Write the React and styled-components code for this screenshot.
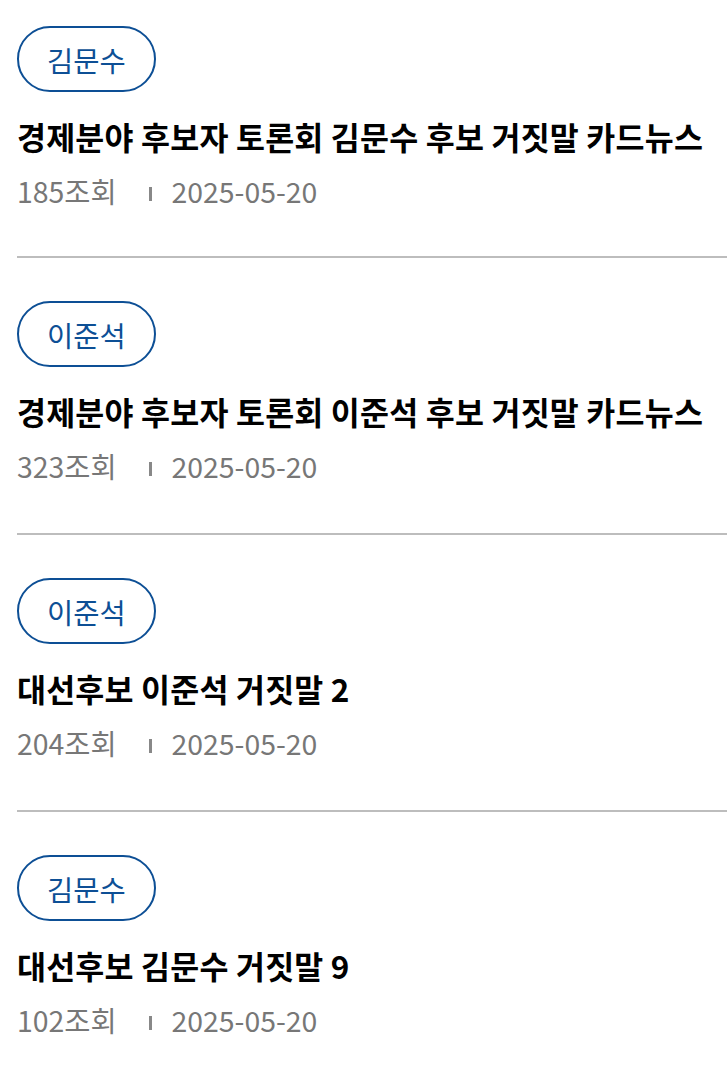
import React from 'react';
import styled, { createGlobalStyle } from 'styled-components';

const GlobalStyle = createGlobalStyle`
  html, body {
    margin: 0;
    padding: 0;
    background: #fff;
  }
  body {
    font-family: "Noto Sans CJK KR", "Noto Sans", sans-serif;
  }
`

const posts = [
  { id: 1, tag: '김문수', title: '경제분야 후보자 토론회 김문수 후보 거짓말 카드뉴스', views: 185, date: '2025-05-20' },
  { id: 2, tag: '이준석', title: '경제분야 후보자 토론회 이준석 후보 거짓말 카드뉴스', views: 323, date: '2025-05-20' },
  { id: 3, tag: '이준석', title: '대선후보 이준석 거짓말 2', views: 204, date: '2025-05-20' },
  { id: 4, tag: '김문수', title: '대선후보 김문수 거짓말 9', views: 102, date: '2025-05-20' },
];

export default function App() {
  return (
    <>
      <GlobalStyle />
      <List>
        {posts.map((post) => (
          <Item key={post.id}>
            <Tag>{post.tag}</Tag>
            <Title>{post.title}</Title>
            <Meta>
              <span>{post.views}조회</span>
              <Divider />
              <span>{post.date}</span>
            </Meta>
          </Item>
        ))}
      </List>
    </>
  );
}

const List = styled.ul`
  list-style: none;
  margin: 0;
  padding: 0 0 0 17px;
`

const Item = styled.li`
  padding: 43px 0 47px;
  border-bottom: 2px solid #bdbdbd;

  &:first-child {
    padding-top: 26px;
    padding-bottom: 45px;
  }
`

const Tag = styled.span`
  display: flex;
  align-items: center;
  justify-content: center;
  box-sizing: border-box;
  width: fit-content;
  height: 66px;
  padding: 0 28px;
  border: 2px solid #0d4f95;
  border-radius: 33px;
  color: #0d4f95;
  font-size: 28.5px;
  font-weight: 400;
`

const Title = styled.h3`
  margin: 24px 0 0;
  font-size: 31.5px;
  line-height: 40px;
  font-weight: 700;
  color: #000;
  letter-spacing: 0.2px;
`

const Meta = styled.div`
  display: flex;
  align-items: center;
  margin-top: 15px;
  font-size: 28.4px;
  line-height: 40px;
  font-weight: 400;
  color: #777;
`

const Divider = styled.i`
  display: block;
  width: 3px;
  height: 14px;
  margin: 6px 20px 0 32px;
  background: #888;
`
